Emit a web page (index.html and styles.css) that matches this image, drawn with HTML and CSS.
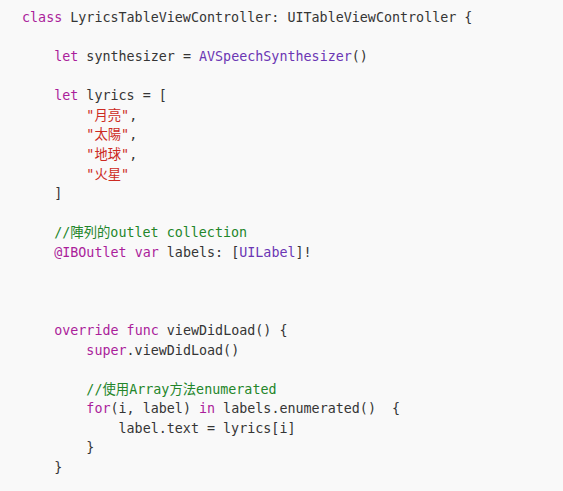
FILE: index.html
```html
<!DOCTYPE html>
<html>
<head>
<meta charset="utf-8">
<link rel="stylesheet" href="styles.css">
</head>
<body>
<pre class="code"><span class="kw">class</span> LyricsTableViewController: UITableViewController {

    <span class="kw">let</span> synthesizer = <span class="ty">AVSpeechSynthesizer</span>()

    <span class="kw">let</span> lyrics = [
        <span class="str">"月亮"</span>,
        <span class="str">"太陽"</span>,
        <span class="str">"地球"</span>,
        <span class="str">"火星"</span>
    ]

    <span class="cm">//陣列的outlet collection</span>
    <span class="kw">@IBOutlet</span> <span class="kw">var</span> labels: [<span class="ty">UILabel</span>]!



    <span class="kw">override</span> <span class="kw">func</span> viewDidLoad() {
        <span class="kw">super</span>.viewDidLoad()

        <span class="cm">//使用Array方法enumerated</span>
        <span class="kw">for</span>(i, label) <span class="kw">in</span> labels.enumerated()  {
            label.text = lyrics[i]
        }
    }
</pre>
</body>
</html>
```

FILE: styles.css
```css
html, body {
  margin: 0;
  padding: 0;
  background: #f9f9f9;
}

.code {
  margin: 0;
  padding: 8px 0 0 22px;
  font-family: "DejaVu Sans Mono", "Noto Sans CJK TC", monospace;
  font-size: 13.37px;
  line-height: 19.57px;
  color: #353535;
  white-space: pre;
}

.kw {
  color: #ab1e9b;
}

.ty {
  color: #6b36b4;
}

.str {
  color: #cc2a22;
}

.cm {
  color: #23862a;
}
```
